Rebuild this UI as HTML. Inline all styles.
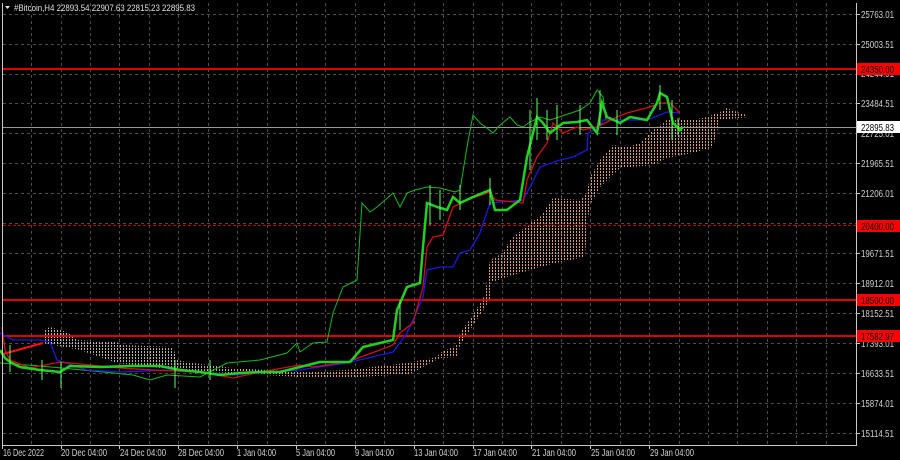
<!DOCTYPE html>
<html><head><meta charset="utf-8"><style>
html,body{margin:0;padding:0;background:#000;width:900px;height:460px;overflow:hidden}
svg{display:block;font-family:"Liberation Sans",sans-serif}
</style></head><body>
<svg width="900" height="460" viewBox="0 0 900 460" xmlns="http://www.w3.org/2000/svg">
<defs>
<pattern id="dots" width="3" height="3" patternUnits="userSpaceOnUse">
<rect x="0" y="0" width="1" height="2" fill="#d9a06e"/>
</pattern>
<pattern id="dots2" width="3" height="3" patternUnits="userSpaceOnUse">
<rect x="0" y="0" width="1" height="2" fill="#bfb0a4"/>
</pattern>
</defs>
<rect width="900" height="460" fill="#000"/>
<g stroke="#4e4e4e" stroke-width="1" stroke-dasharray="3,3">
<line x1="3" y1="14.5" x2="856" y2="14.5"/><line x1="3" y1="44.5" x2="856" y2="44.5"/><line x1="3" y1="74.5" x2="856" y2="74.5"/><line x1="3" y1="103.5" x2="856" y2="103.5"/><line x1="3" y1="133.5" x2="856" y2="133.5"/><line x1="3" y1="163.5" x2="856" y2="163.5"/><line x1="3" y1="193.5" x2="856" y2="193.5"/><line x1="3" y1="223.5" x2="856" y2="223.5"/><line x1="3" y1="253.5" x2="856" y2="253.5"/><line x1="3" y1="283.5" x2="856" y2="283.5"/><line x1="3" y1="313.5" x2="856" y2="313.5"/><line x1="3" y1="343.5" x2="856" y2="343.5"/><line x1="3" y1="373.5" x2="856" y2="373.5"/><line x1="3" y1="403.5" x2="856" y2="403.5"/><line x1="3" y1="433.5" x2="856" y2="433.5"/>
<line x1="31.5" y1="3" x2="31.5" y2="445"/><line x1="61.5" y1="3" x2="61.5" y2="445"/><line x1="90.5" y1="3" x2="90.5" y2="445"/><line x1="119.5" y1="3" x2="119.5" y2="445"/><line x1="149.5" y1="3" x2="149.5" y2="445"/><line x1="178.5" y1="3" x2="178.5" y2="445"/><line x1="208.5" y1="3" x2="208.5" y2="445"/><line x1="237.5" y1="3" x2="237.5" y2="445"/><line x1="267.5" y1="3" x2="267.5" y2="445"/><line x1="296.5" y1="3" x2="296.5" y2="445"/><line x1="325.5" y1="3" x2="325.5" y2="445"/><line x1="355.5" y1="3" x2="355.5" y2="445"/><line x1="384.5" y1="3" x2="384.5" y2="445"/><line x1="414.5" y1="3" x2="414.5" y2="445"/><line x1="443.5" y1="3" x2="443.5" y2="445"/><line x1="473.5" y1="3" x2="473.5" y2="445"/><line x1="502.5" y1="3" x2="502.5" y2="445"/><line x1="531.5" y1="3" x2="531.5" y2="445"/><line x1="561.5" y1="3" x2="561.5" y2="445"/><line x1="590.5" y1="3" x2="590.5" y2="445"/><line x1="620.5" y1="3" x2="620.5" y2="445"/><line x1="649.5" y1="3" x2="649.5" y2="445"/><line x1="679.5" y1="3" x2="679.5" y2="445"/><line x1="708.5" y1="3" x2="708.5" y2="445"/><line x1="737.5" y1="3" x2="737.5" y2="445"/><line x1="767.5" y1="3" x2="767.5" y2="445"/><line x1="796.5" y1="3" x2="796.5" y2="445"/><line x1="826.5" y1="3" x2="826.5" y2="445"/>
</g>
<path d="M43,330 L50,327 L67,332 L77,340 L117,342 L120,345 L173,347 L177,360 L193,363 L233,368 L300,372 L300,377 L177,370 L117,363 L80,350 L43,343 Z" fill="url(#dots2)"/>
<path d="M233,368 L280,373 L347,370 L407,363 L437,357 L440,353 L457,345 L460,333 L473,315 L485,295 L490,260 L503,253 L510,240 L530,223 L540,217 L553,198 L580,200 L587,193 L590,177 L600,160 L613,145 L627,147 L640,143 L653,130 L667,120 L693,120 L707,117 L720,112 L727,108 L740,113 L747,115 L747,117 L720,120 L713,147 L693,153 L667,158 L653,165 L620,168 L600,187 L590,205 L587,225 L585,257 L560,262 L540,267 L507,277 L492,282 L490,300 L480,315 L470,330 L460,345 L457,357 L440,358 L410,374 L360,377 L300,377 L233,373 Z" fill="url(#dots)"/>
<line x1="3" y1="127.5" x2="856" y2="127.5" stroke="#9a9a9a" stroke-width="1"/>
<line x1="3" y1="69" x2="856" y2="69" stroke="#e00000" stroke-width="2"/>
<line x1="3" y1="225.5" x2="856" y2="225.5" stroke="#c00000" stroke-width="1" stroke-dasharray="3,2"/>
<line x1="3" y1="300" x2="856" y2="300" stroke="#e00000" stroke-width="2"/>
<line x1="3" y1="336" x2="856" y2="336" stroke="#e00000" stroke-width="2"/>
<line x1="3" y1="354" x2="43" y2="343" stroke="#ff1010" stroke-width="2"/>
<polyline fill="none" stroke="#18b818" stroke-width="1" points="0,363 40,366 83,370 133,375 150,380 167,375 200,377 227,363 260,360 287,353 297,343 300,352 313,343 327,342 333,313 343,287 357,280 362,203 370,212 377,207 385,200 393,193 400,207 407,193 415,190 427,187 440,188 455,192 460,190 467,147 473,115 480,123 487,128 493,133 500,125 510,117 517,125 523,127 530,122 540,117 550,120 565,115 580,110 590,103 597,90 603,97 606,120"/>
<polyline fill="none" stroke="#1a1ae0" stroke-width="1.3" points="0,333 13,340 40,340 50,342 57,360 87,370 123,372 167,370 233,375 300,370 320,367 347,363 393,352 407,333 413,320 423,297 427,270 440,267 453,267 460,253 470,250 480,233 490,203 523,200 530,187 540,167 560,160 573,157 587,150 588,133 600,127 603,120 647,120 667,112 680,113"/>
<polyline fill="none" stroke="#d01010" stroke-width="1.3" points="2,327 5,350 10,360 30,368 60,362 90,365 120,368 153,370 200,372 233,378 260,372 300,365 313,367 347,362 380,350 393,345 400,333 413,323 423,287 427,247 433,237 443,235 453,207 467,200 473,198 490,192 495,200 523,203 527,180 537,157 547,143 553,123 563,133 577,127 583,130 597,127 617,117 627,113 650,107 660,103 670,103 680,113"/>
<polyline fill="none" stroke="#22d022" stroke-width="2.5" points="0,350 5,358 10,362 20,367 40,370 60,372 70,366 100,367 130,366 160,366 180,370 200,372 220,375 240,373 260,372 280,372 300,367 320,362 350,362 363,347 380,343 393,340 397,310 407,287 420,283 423,247 427,203 437,207 447,210 453,197 460,203 473,197 490,190 495,210 507,210 520,200 527,157 537,117 543,123 550,133 563,123 577,122 587,120 597,133 602,103 607,117 620,123 630,117 647,120 657,103 660,93 667,97 673,123 680,130 683,127"/>
<g stroke="#5cff5c" stroke-width="1">
<line x1="10" y1="345" x2="10" y2="372"/><line x1="42" y1="360" x2="42" y2="380"/><line x1="61" y1="362" x2="61" y2="388"/><line x1="175" y1="360" x2="175" y2="388"/><line x1="210" y1="360" x2="210" y2="380"/><line x1="400" y1="300" x2="400" y2="330"/><line x1="430" y1="185" x2="430" y2="225"/><line x1="440" y1="190" x2="440" y2="220"/><line x1="460" y1="185" x2="460" y2="210"/><line x1="490" y1="178" x2="490" y2="205"/><line x1="530" y1="110" x2="530" y2="170"/><line x1="537" y1="98" x2="537" y2="140"/><line x1="547" y1="110" x2="547" y2="140"/><line x1="557" y1="105" x2="557" y2="140"/><line x1="580" y1="105" x2="580" y2="135"/><line x1="600" y1="90" x2="600" y2="125"/><line x1="617" y1="110" x2="617" y2="135"/><line x1="660" y1="85" x2="660" y2="110"/><line x1="672" y1="100" x2="672" y2="140"/><line x1="678" y1="118" x2="678" y2="135"/>
</g>
<polyline fill="none" stroke="#c8c8c8" stroke-width="1" points="2.5,3 2.5,445.5 856.5,445.5 856.5,3"/>
<g stroke="#c8c8c8"><line x1="856" y1="14.5" x2="860" y2="14.5"/><line x1="856" y1="44.5" x2="860" y2="44.5"/><line x1="856" y1="103.5" x2="860" y2="103.5"/><line x1="856" y1="163.5" x2="860" y2="163.5"/><line x1="856" y1="193.5" x2="860" y2="193.5"/><line x1="856" y1="253.5" x2="860" y2="253.5"/><line x1="856" y1="283.5" x2="860" y2="283.5"/><line x1="856" y1="313.5" x2="860" y2="313.5"/><line x1="856" y1="343.5" x2="860" y2="343.5"/><line x1="856" y1="373.5" x2="860" y2="373.5"/><line x1="856" y1="403.5" x2="860" y2="403.5"/><line x1="856" y1="433.5" x2="860" y2="433.5"/></g>
<g fill="#d0d0d0" font-size="10">
<text x="861" y="18" textLength="33" lengthAdjust="spacingAndGlyphs">25763.01</text><text x="861" y="48" textLength="33" lengthAdjust="spacingAndGlyphs">25003.51</text><text x="861" y="77" textLength="33" lengthAdjust="spacingAndGlyphs">24244.01</text><text x="861" y="107" textLength="33" lengthAdjust="spacingAndGlyphs">23484.51</text><text x="861" y="137" textLength="33" lengthAdjust="spacingAndGlyphs">22725.01</text><text x="861" y="167" textLength="33" lengthAdjust="spacingAndGlyphs">21965.51</text><text x="861" y="197" textLength="33" lengthAdjust="spacingAndGlyphs">21206.01</text><text x="861" y="257" textLength="33" lengthAdjust="spacingAndGlyphs">19671.51</text><text x="861" y="287" textLength="33" lengthAdjust="spacingAndGlyphs">18912.01</text><text x="861" y="317" textLength="33" lengthAdjust="spacingAndGlyphs">18152.51</text><text x="861" y="347" textLength="33" lengthAdjust="spacingAndGlyphs">17393.01</text><text x="861" y="377" textLength="33" lengthAdjust="spacingAndGlyphs">16633.51</text><text x="861" y="407" textLength="33" lengthAdjust="spacingAndGlyphs">15874.01</text><text x="861" y="437" textLength="33" lengthAdjust="spacingAndGlyphs">15114.51</text>
</g>
<rect x="857" y="63" width="43" height="12" fill="#ff0000"/><text x="861" y="73" font-size="10" fill="#000" textLength="33" lengthAdjust="spacingAndGlyphs">24350.00</text>
<rect x="857" y="121" width="43" height="12" fill="#fff"/><text x="861" y="131" font-size="10" fill="#000" textLength="33" lengthAdjust="spacingAndGlyphs">22895.83</text>
<rect x="857" y="220" width="43" height="12" fill="#ff0000"/><text x="861" y="230" font-size="10" fill="#000" textLength="33" lengthAdjust="spacingAndGlyphs">20400.00</text>
<rect x="857" y="294" width="43" height="12" fill="#ff0000"/><text x="861" y="304" font-size="10" fill="#000" textLength="33" lengthAdjust="spacingAndGlyphs">18500.00</text>
<rect x="857" y="330" width="43" height="12" fill="#ff0000"/><text x="861" y="340" font-size="10" fill="#000" textLength="33" lengthAdjust="spacingAndGlyphs">17582.97</text>
<g stroke="#c8c8c8"><line x1="2.5" y1="445" x2="2.5" y2="449"/><line x1="61.5" y1="445" x2="61.5" y2="449"/><line x1="119.5" y1="445" x2="119.5" y2="449"/><line x1="178.5" y1="445" x2="178.5" y2="449"/><line x1="237.5" y1="445" x2="237.5" y2="449"/><line x1="296.5" y1="445" x2="296.5" y2="449"/><line x1="355.5" y1="445" x2="355.5" y2="449"/><line x1="414.5" y1="445" x2="414.5" y2="449"/><line x1="473.5" y1="445" x2="473.5" y2="449"/><line x1="531.5" y1="445" x2="531.5" y2="449"/><line x1="590.5" y1="445" x2="590.5" y2="449"/><line x1="649.5" y1="445" x2="649.5" y2="449"/></g>
<g fill="#d0d0d0" font-size="10" lengthAdjust="spacingAndGlyphs">
<text x="3" y="456" textLength="41" lengthAdjust="spacingAndGlyphs">16 Dec 2022</text><text x="61" y="456" textLength="46" lengthAdjust="spacingAndGlyphs">20 Dec 04:00</text><text x="120" y="456" textLength="46" lengthAdjust="spacingAndGlyphs">24 Dec 04:00</text><text x="178" y="456" textLength="46" lengthAdjust="spacingAndGlyphs">28 Dec 04:00</text><text x="237" y="456" textLength="39" lengthAdjust="spacingAndGlyphs">1 Jan 04:00</text><text x="296" y="456" textLength="39" lengthAdjust="spacingAndGlyphs">5 Jan 04:00</text><text x="355" y="456" textLength="39" lengthAdjust="spacingAndGlyphs">9 Jan 04:00</text><text x="414" y="456" textLength="44" lengthAdjust="spacingAndGlyphs">13 Jan 04:00</text><text x="473" y="456" textLength="44" lengthAdjust="spacingAndGlyphs">17 Jan 04:00</text><text x="532" y="456" textLength="44" lengthAdjust="spacingAndGlyphs">21 Jan 04:00</text><text x="591" y="456" textLength="44" lengthAdjust="spacingAndGlyphs">25 Jan 04:00</text><text x="650" y="456" textLength="44" lengthAdjust="spacingAndGlyphs">29 Jan 04:00</text>
</g>
<path d="M5,6 L10,6 L7.5,9 Z" fill="#e0e0e0"/>
<text x="14" y="11" font-size="9.5" fill="#e0e0e0" textLength="181" lengthAdjust="spacingAndGlyphs">#Bitcoin,H4  22893.54 22907.63 22815.23 22895.83</text>
</svg>
</body></html>
